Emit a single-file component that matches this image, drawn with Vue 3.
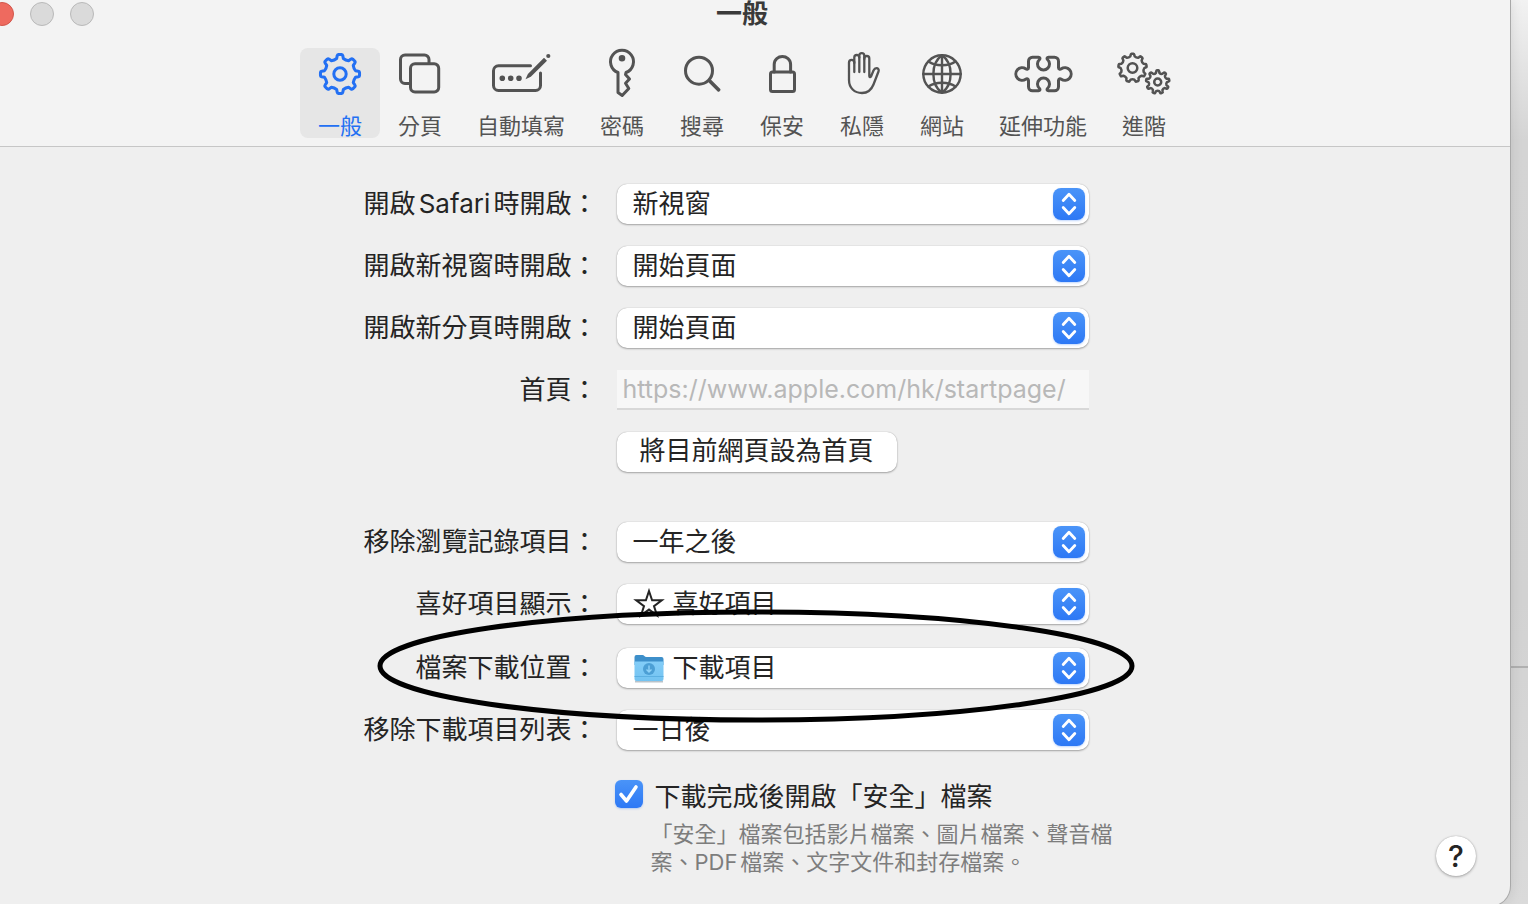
<template>
    <div class="desktop">
        <main class="window">
            <header class="header">
                <div class="titlebar">
                    <div class="lights">
                        <button class="light close" aria-label="關閉"></button>
                        <button class="light" aria-label="縮到最小" disabled></button>
                        <button class="light" aria-label="縮放" disabled></button>
                    </div>
                    <h1>一般</h1>
                </div>
                <nav class="toolbar">
                    <button v-for="tab in tabs" :key="tab.id" class="tab" :class="{ active: tab.id === activeTab }" @click="activeTab = tab.id">
                        <svg viewBox="0 0 64 52" width="64" height="52" aria-hidden="true">
                            <path v-for="(line, i) in tab.lines" :key="i" :d="line" fill="none" stroke="currentColor" :stroke-width="tab.stroke" stroke-linejoin="round" stroke-linecap="round" />
                            <path v-if="tab.solid" :d="tab.solid" fill="currentColor" />
                        </svg>
                        <span>{{ tab.label }}</span>
                    </button>
                </nav>
            </header>

            <div class="content">
                <form class="form" @submit.prevent>
                    <section v-for="(group, g) in groups" :key="g" class="group" :class="'group-' + group.name">
                        <template v-for="row in group.rows" :key="row.id">
                            <label :for="row.id">{{ row.label }}</label>
                            <div v-if="row.options" class="popup" :class="{ 'with-icon': row.icon }">
                                <select :id="row.id" v-model="form[row.id]">
                                    <option v-for="option in row.options" :key="option">{{ option }}</option>
                                </select>
                                <svg v-if="row.icon === 'star'" class="row-icon" viewBox="0 0 32 32" width="32" height="32" aria-hidden="true">
                                    <path d="M16 3l3.100 9.300h9.700l-7.800 5.800 3 9.300-8-5.800-8 5.800 3-9.300-7.800-5.800h9.700z" fill="none" stroke="#242424" stroke-width="2" />
                                </svg>
                                <svg v-if="row.icon === 'folder'" class="row-icon" viewBox="0 0 32 32" width="32" height="32" aria-hidden="true">
                                    <defs>
                                        <linearGradient id="folder" x1="0" y1="0" x2="0" y2="1">
                                            <stop offset="0" stop-color="#83cdf8" />
                                            <stop offset="1" stop-color="#74c3f1" />
                                        </linearGradient>
                                    </defs>
                                    <path d="M2 29.500h28" stroke="#b9c3ca" stroke-width="2" />
                                    <path d="M1.500 5a2 2 0 0 1 2-2h6c1.600 0 2 2 4 2h15a2 2 0 0 1 2 2v6h-29z" fill="#3d8fca" />
                                    <path d="M1.500 9.500h29V27a2 2 0 0 1-2 2h-25a2 2 0 0 1-2-2z" fill="url(#folder)" />
                                    <path d="M1.500 24.500h29" stroke="#5cb0e2" stroke-width="1" />
                                    <circle cx="16" cy="17" r="6" fill="#4c9fd5" />
                                    <path d="M16 13.500v6M13.500 17.500l2.500 2.500 2.500-2.500" fill="none" stroke="#8fd2f8" stroke-width="1.400" />
                                </svg>
                                <span class="arrows">
                                    <svg viewBox="0 0 32 32" width="32" height="32" aria-hidden="true">
                                        <path d="M10.200 12.500L16 6.300l5.800 6.200M10.200 19.500L16 25.700l5.800-6.200" fill="none" stroke="#fff" stroke-width="2.800" stroke-linecap="round" stroke-linejoin="round" />
                                    </svg>
                                </span>
                            </div>
                            <input v-else :id="row.id" v-model="form[row.id]" class="url" type="text" disabled />
                        </template>
                        <button v-if="group.name === 'startup'" class="push" type="button">將目前網頁設為首頁</button>
                        <svg v-if="group.name === 'downloads'" class="marker" viewBox="0 0 758 114" aria-hidden="true">
                            <ellipse cx="379" cy="57" rx="376" ry="54" fill="none" stroke="#000" stroke-width="5" />
                        </svg>
                    </section>

                    <section class="group group-safe">
                        <div class="safe">
                            <label class="check">
                                <input v-model="form.openSafe" type="checkbox" aria-describedby="safe-hint" />
                                <span>下載完成後開啟「安全」檔案</span>
                            </label>
                            <p id="safe-hint">「安全」檔案包括影片檔案、圖片檔案、聲音檔案、PDF檔案、文字文件和封存檔案。</p>
                        </div>
                    </section>
                </form>
                <button class="help" aria-label="輔助說明">?</button>
            </div>
        </main>
    </div>
</template>

<script setup>
import { reactive, ref } from "vue";

// closed outline of a cog wheel, first tooth pointing up
const gear = (cx, cy, root, tip, teeth) => {
    const step = (Math.PI * 2) / teeth;
    const at = (r, a) => `${(cx + r * Math.sin(a)).toFixed(2)} ${(cy - r * Math.cos(a)).toFixed(2)}`;
    let d = "";
    for (let i = 0; i < teeth; i++) {
        const a = i * step;
        d += `${i ? "L" : "M"}${at(root, a - step * 0.27)}`;
        d += `L${at(tip - 1, a - step * 0.19)}Q${at(tip, a - step * 0.17)} ${at(tip, a - step * 0.1)}`;
        d += `L${at(tip, a + step * 0.1)}Q${at(tip, a + step * 0.17)} ${at(tip - 1, a + step * 0.19)}`;
        d += `L${at(root, a + step * 0.27)}Q${at(root - 1, a + step * 0.5)} ${at(root, a + step * 0.73)}`;
    }
    return d + "Z";
};

const circle = (cx, cy, r) => `M${cx - r} ${cy}a${r} ${r} 0 1 0 ${r * 2} 0a${r} ${r} 0 1 0 ${-r * 2} 0Z`;

const activeTab = ref("general");

const tabs = [
    { id: "general", label: "一般", stroke: 3, lines: [gear(32, 26, 15.8, 19.6, 8), circle(32, 26, 6.2)] },
    {
        id: "tabs",
        label: "分頁",
        stroke: 3,
        lines: [
            "M41 14.5V11.5a4.5 4.5 0 0 0-4.5-4.5H17a4.5 4.5 0 0 0-4.5 4.5V31a4.5 4.5 0 0 0 4.5 4.5h4",
            "M27 15.8h19.2a4.5 4.5 0 0 1 4.5 4.5v19.2a4.5 4.5 0 0 1-4.5 4.5H27a4.5 4.5 0 0 1-4.5-4.5V20.3a4.5 4.5 0 0 1 4.5-4.5z"
        ]
    },
    {
        id: "autofill",
        label: "自動填寫",
        stroke: 3,
        lines: ["M41.5 17.8H9.5a5 5 0 0 0-5 5v14.7a5 5 0 0 0 5 5h37a5 5 0 0 0 5-5V25"],
        solid: circle(13.3, 30.3, 2.8) + circle(21.7, 30.3, 2.8) + circle(30, 30.3, 2.8) + circle(59.3, 8, 2.1) + "M36.5 31.3l2.4-5.4L55 9.8l3 3L41.8 28.8z"
    },
    {
        id: "passwords",
        label: "密碼",
        stroke: 3,
        lines: ["M28 24.5A11.5 11.5 0 1 1 36 24.5L35.5 26.5 39.5 31 35.5 35.2 38.8 40.5 32.2 47.5 28 44.5Z"],
        solid: circle(32, 10.3, 3.3)
    },
    { id: "search", label: "搜尋", stroke: 3, lines: [circle(29, 22.7, 13.5), "M39 32.7l9.5 9.5M40 32.7l9 9"] },
    {
        id: "security",
        label: "保安",
        stroke: 3,
        lines: [
            "M22.5 24h20a2 2 0 0 1 2 2v15.500a2 2 0 0 1-2 2h-20a2 2 0 0 1-2-2V26a2 2 0 0 1 2-2z",
            "M24.2 24v-7.5c0-10.6 16.4-10.6 16.4 0V24"
        ]
    },
    {
        id: "privacy",
        label: "私隱",
        stroke: 2.3,
        lines: [
            "M24.3 24V14.5a2.65 2.65 0 0 0-5.3 0V32c0 8 5.5 13 13 13 6 0 9.5-3.5 11.5-8.5l5-13c.8-2-.5-3.3-2-3.3s-2.4 1-3 2.3L41 28.5c-.6 1-1.7.8-1.7-.5V10.5a2.5 2.5 0 0 0-5 0V24",
            "M34.3 11V7.7a2.5 2.5 0 0 0-5 0V24",
            "M29.3 9.5a2.5 2.5 0 0 0-5 0V15"
        ]
    },
    {
        id: "websites",
        label: "網站",
        stroke: 2.4,
        lines: [
            circle(32, 26, 18.7),
            "M32 7.3v37.4M13.3 26h37.4",
            "M32 7.3c-11.5 8-11.5 29.4 0 37.4c11.5-8 11.5-29.4 0-37.4",
            "M18.5 13.5c7 5 20 5 27 0M18.5 38.5c7-5 20-5 27 0"
        ]
    },
    {
        id: "extensions",
        label: "延伸功能",
        stroke: 3,
        lines: [
            "M27.5 9.2H21.500a4 4 0 0 0-4 4V19.5c0 1.8-1.500 2.200-2.800 1.300A6.300 6.300 0 1 0 14.700 31.200c1.300-.9 2.800-.5 2.800 1.300V38.800a4 4 0 0 0 4 4H27.500c1.500 0 1.800-1.300 1-2.300A6 6 0 1 1 36.500 40.500c-.8 1-.5 2.300 1 2.300H43.500a4 4 0 0 0 4-4V32.500c0-1.800 1.500-2.200 2.800-1.300A6.300 6.300 0 1 0 50.300 20.800c-1.300.9-2.800.5-2.800-1.300V13.200a4 4 0 0 0-4-4H37.500c-1.500 0-1.800 1.300-1 2.300A6 6 0 1 1 28.500 11.500c.8-1 .5-2.300-1-2.300Z"
        ]
    },
    {
        id: "advanced",
        label: "進階",
        stroke: 2.5,
        lines: [gear(20.5, 20, 11.8, 14.2, 9), circle(20.5, 20, 4.8), gear(45.7, 34, 9.3, 11.7, 9), circle(45.7, 34, 3.5)]
    }
];

const groups = [
    {
        name: "startup",
        rows: [
            { id: "launch", label: "開啟Safari時開啟：", options: ["新視窗", "新私密視窗"] },
            { id: "newWindow", label: "開啟新視窗時開啟：", options: ["開始頁面", "首頁"] },
            { id: "newTab", label: "開啟新分頁時開啟：", options: ["開始頁面", "首頁"] },
            { id: "homepage", label: "首頁：" }
        ]
    },
    {
        name: "history",
        rows: [
            { id: "history", label: "移除瀏覽記錄項目：", options: ["一年之後", "一個月之後"] },
            { id: "favorites", label: "喜好項目顯示：", icon: "star", options: ["喜好項目"] }
        ]
    },
    {
        name: "downloads",
        rows: [
            { id: "location", label: "檔案下載位置：", icon: "folder", options: ["下載項目"] },
            { id: "clearList", label: "移除下載項目列表：", options: ["一日後", "手動"] }
        ]
    }
];

const form = reactive({
    launch: "新視窗",
    newWindow: "開始頁面",
    newTab: "開始頁面",
    homepage: "https://www.apple.com/hk/startpage/",
    history: "一年之後",
    favorites: "喜好項目",
    location: "下載項目",
    clearList: "一日後",
    openSafe: true
});
</script>

<style>
body {
    background: #d6d6d6;
}
</style>

<style scoped>
.desktop {
    position: relative;
    height: 100vh;
    overflow: hidden;
    background: linear-gradient(#f2f2f2, #d4d4d4 140px, #d2d2d2 600px, #dadada);
    font-family: Inter, "Noto Sans CJK TC", sans-serif;
    font-size: 26px;
    color: #242424;
    text-autospace: normal;
}
.desktop::before {
    content: "";
    position: absolute;
    top: 666px;
    right: 0;
    width: 50%;
    height: 2px;
    background: #b0b0b0;
}
button, select, input {
    font: inherit;
    color: inherit;
    border: 0;
    margin: 0;
}
.window {
    position: relative;
    margin: 0 18px 0 -26px;
    background: #efefef;
    border-radius: 0 0 20px 20px;
    box-shadow: 0 0 0 1px #a8a8a8, 0 0 14px rgba(0, 0, 0, .12);
}
.header {
    padding-bottom: 8px;
    background: #f3f3f3;
    border-bottom: 1px solid #c6c6c6;
}
.titlebar {
    display: grid;
    grid-template-columns: 1fr auto 1fr;
    align-items: center;
    height: 28px;
}
.titlebar h1 {
    margin: 0;
    font-size: 26px;
    line-height: 28px;
    font-weight: 600;
    color: #3a3a3a;
}
.lights {
    display: flex;
    gap: 16px;
    padding-left: 16px;
}
.light {
    width: 24px;
    height: 24px;
    padding: 0;
    border-radius: 50%;
    background: #dadada;
    border: 1px solid #b9b9b9;
}
.light.close {
    background: #ee6a5f;
    border-color: #d2564b;
}
.toolbar {
    display: flex;
    justify-content: center;
    margin-top: 20px;
}
.tab {
    display: flex;
    flex-direction: column;
    align-items: center;
    justify-content: space-between;
    min-width: 80px;
    height: 90px;
    padding: 0 17px;
    border-radius: 8px;
    background: none;
    color: #535353;
    font-size: 22px;
    line-height: 24px;
}
.tab svg {
    margin: 0 -9px;
}
.tab.active {
    background: #e6e6e6;
    color: #2370f3;
}
.content {
    display: grid;
    grid-template-columns: 1fr auto 1fr;
    padding: 37px 34px 30px;
}
.form {
    grid-column: 2;
}
.group {
    position: relative;
    display: grid;
    grid-template-columns: 238px 508px;
    column-gap: 19px;
    row-gap: 22px;
    align-items: center;
}
.group > label {
    text-align: right;
    white-space: nowrap;
    line-height: 38px;
}
.group-history {
    margin-top: 50px;
}
.group-downloads {
    margin-top: 24px;
}
.group-safe {
    margin-top: 30px;
}
.popup {
    position: relative;
    width: 472px;
    height: 40px;
}
.popup select {
    appearance: none;
    display: block;
    width: 100%;
    height: 40px;
    padding: 0 48px 2px 16px;
    border-radius: 10px;
    background: #fff;
    box-shadow: 0 0 1px rgba(0, 0, 0, .3), 0 1px 2px rgba(0, 0, 0, .3);
}
.popup.with-icon select {
    padding-left: 56px;
}
.row-icon {
    position: absolute;
    top: 4px;
    left: 16px;
    pointer-events: none;
}
.arrows {
    position: absolute;
    top: 4px;
    right: 4px;
    height: 32px;
    border-radius: 8px;
    background: linear-gradient(#4a94f8, #2d78f5);
    box-shadow: 0 1px 2px rgba(45, 120, 245, .3);
    pointer-events: none;
}
.arrows svg {
    display: block;
}
.url {
    box-sizing: border-box;
    width: 472px;
    height: 40px;
    padding: 0 6px;
    background: #f7f7f7;
    border-bottom: 2px solid #d8d8d8;
    color: #b8b8b8;
    font-size: 25px;
}
.push {
    grid-column: 2;
    justify-self: start;
    height: 40px;
    padding: 0 23px 2px;
    border-radius: 10px;
    background: #fff;
    line-height: 38px;
    box-shadow: 0 0 1px rgba(0, 0, 0, .3), 0 1px 2px rgba(0, 0, 0, .3);
}
.marker {
    position: absolute;
    top: -39px;
    left: 17px;
    width: 758px;
    height: 114px;
    pointer-events: none;
    z-index: 1;
}
.safe {
    grid-column: 2;
}
.check {
    display: flex;
    align-items: center;
    gap: 12px;
    height: 28px;
    margin-left: -2px;
}
.check input {
    appearance: none;
    width: 28px;
    height: 28px;
    border-radius: 6px;
    background: linear-gradient(#4a94f8, #2d78f5);
    box-shadow: 0 1px 2px rgba(45, 120, 245, .3);
}
.check input:checked {
    background: url('data:image/svg+xml,<svg xmlns="http://www.w3.org/2000/svg" viewBox="0 0 28 28"><path d="M6 14.500l5.500 6.500L21 7" fill="none" stroke="white" stroke-width="3.600" stroke-linecap="round" stroke-linejoin="round"/></svg>'), linear-gradient(#4a94f8, #2d78f5);
}
.safe p {
    margin: 12px 0 0;
    padding-left: 34px;
    font-size: 22px;
    line-height: 28px;
    color: #7d7d7d;
}
.help {
    grid-column: 3;
    justify-self: end;
    align-self: end;
    width: 40px;
    height: 40px;
    padding: 0;
    border-radius: 50%;
    background: #fff;
    font-size: 30px;
    font-weight: 500;
    line-height: 40px;
    box-shadow: 0 0 1px rgba(0, 0, 0, .3), 0 1px 3px rgba(0, 0, 0, .3);
}
</style>
